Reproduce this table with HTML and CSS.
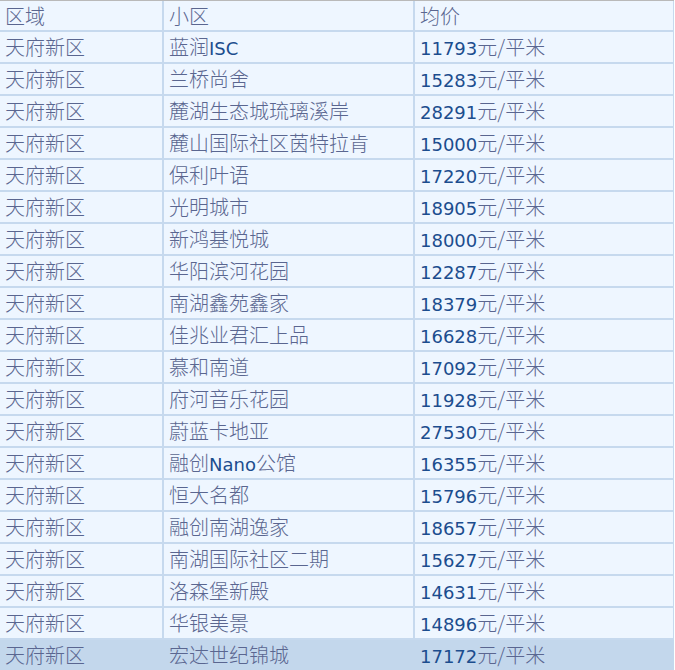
FILE: index.html
```html
<!DOCTYPE html>
<html lang="zh-CN">
<head>
<meta charset="utf-8">
<title>均价</title>
<link rel="stylesheet" href="styles.css">
</head>
<body>
<div class="wrap">
<table class="price-table">
<thead>
<tr><th class="c1">区域</th><th class="c2">小区</th><th class="c3">均价</th></tr>
</thead>
<tbody>
<tr><td>天府新区</td><td>蓝润<span class="lat">ISC</span></td><td><span class="num">11793</span>元/平米</td></tr>
<tr><td>天府新区</td><td>兰桥尚舍</td><td><span class="num">15283</span>元/平米</td></tr>
<tr><td>天府新区</td><td>麓湖生态城琉璃溪岸</td><td><span class="num">28291</span>元/平米</td></tr>
<tr><td>天府新区</td><td>麓山国际社区茵特拉肯</td><td><span class="num">15000</span>元/平米</td></tr>
<tr><td>天府新区</td><td>保利叶语</td><td><span class="num">17220</span>元/平米</td></tr>
<tr><td>天府新区</td><td>光明城市</td><td><span class="num">18905</span>元/平米</td></tr>
<tr><td>天府新区</td><td>新鸿基悦城</td><td><span class="num">18000</span>元/平米</td></tr>
<tr><td>天府新区</td><td>华阳滨河花园</td><td><span class="num">12287</span>元/平米</td></tr>
<tr><td>天府新区</td><td>南湖鑫苑鑫家</td><td><span class="num">18379</span>元/平米</td></tr>
<tr><td>天府新区</td><td>佳兆业君汇上品</td><td><span class="num">16628</span>元/平米</td></tr>
<tr><td>天府新区</td><td>慕和南道</td><td><span class="num">17092</span>元/平米</td></tr>
<tr><td>天府新区</td><td>府河音乐花园</td><td><span class="num">11928</span>元/平米</td></tr>
<tr><td>天府新区</td><td>蔚蓝卡地亚</td><td><span class="num">27530</span>元/平米</td></tr>
<tr><td>天府新区</td><td>融创<span class="lat">Nano</span>公馆</td><td><span class="num">16355</span>元/平米</td></tr>
<tr><td>天府新区</td><td>恒大名都</td><td><span class="num">15796</span>元/平米</td></tr>
<tr><td>天府新区</td><td>融创南湖逸家</td><td><span class="num">18657</span>元/平米</td></tr>
<tr><td>天府新区</td><td>南湖国际社区二期</td><td><span class="num">15627</span>元/平米</td></tr>
<tr><td>天府新区</td><td>洛森堡新殿</td><td><span class="num">14631</span>元/平米</td></tr>
<tr><td>天府新区</td><td>华银美景</td><td><span class="num">14896</span>元/平米</td></tr>
<tr class="hl"><td>天府新区</td><td>宏达世纪锦城</td><td><span class="num">17172</span>元/平米</td></tr>
</tbody>
</table>
</div>
</body>
</html>
```

FILE: styles.css
```css
html, body {
  margin: 0;
  padding: 0;
  background: #ffffff;
}

.wrap {
  width: 674px;
  border-top: 1px solid #b9b9b9;
  overflow: hidden;
}

.price-table {
  width: 674px;
  border-collapse: collapse;
  table-layout: fixed;
  font-family: "Noto Sans CJK SC", "DejaVu Sans", sans-serif;
  font-size: 20px;
  font-weight: 300;
  color: #5a6690;
}

.price-table th,
.price-table td {
  background: #eef6ff;
  border-right: 2px solid #c6d9ee;
  border-bottom: 2px solid #c6d9ee;
  height: 30px;
  padding: 0 0 0 5px;
  text-align: left;
  font-weight: 300;
  vertical-align: middle;
  white-space: nowrap;
  line-height: 30px;
  overflow: hidden;
}

.price-table th {
  height: 29px;
  line-height: 29px;
}

.price-table .c1 { width: 157px; }
.price-table .c2 { width: 244px; }
.price-table .c3 { width: 253px; }

.price-table .num,
.price-table .lat {
  font-family: "DejaVu Sans", sans-serif;
  font-size: 18px;
  font-weight: normal;
  line-height: 1;
  color: #1c4d8e;
}

.price-table tr.hl td {
  background: #c3d7ec;
  border-color: #c3d7ec;
}
```
